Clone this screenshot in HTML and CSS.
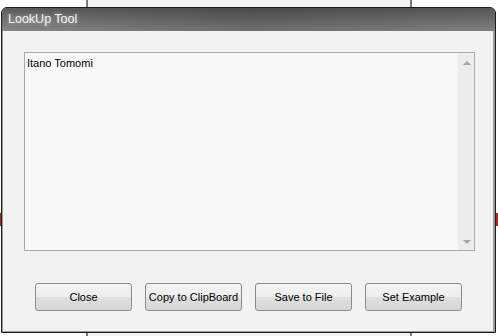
FILE: index.html
```html
<!DOCTYPE html>
<html lang="en">
  <head>
    <meta charset="UTF-8" />
    <title>LookUp Tool</title>
    <link rel="stylesheet" href="styles.css">
  </head>
  <body>
    <div class="window">
      <div class="titlebar">LookUp Tool</div>
      <div class="client">
        <div class="textbox">
          <div class="text">Itano Tomomi</div>
          <div class="scrollbar">
            <span class="arrow up"></span>
            <span class="arrow down"></span>
          </div>
        </div>
        <div class="buttons">
          <button class="btn">Close</button>
          <button class="btn">Copy to ClipBoard</button>
          <button class="btn">Save to File</button>
          <button class="btn">Set Example</button>
        </div>
      </div>
    </div>
  </body>
</html>
```

FILE: styles.css
```css
*,
*::before,
*::after {
  box-sizing: border-box;
}
:root {
  --ff-base: "Liberation Sans", Arial, sans-serif;
}
body {
  margin: 0;
  padding: 7px 0 0 1px;
  height: 336px;
  overflow: hidden;
  font-family: var(--ff-base);
  background:
    linear-gradient(#b3241c, #b3241c) no-repeat 0 213px / 1px 13px,
    linear-gradient(#b3241c, #b3241c) no-repeat 496px 213px / 2px 13px,
    linear-gradient(to right,
      #fff 86px, #7a7a7a 86px, #7a7a7a 88px,
      #f3f3f3 88px, #f3f3f3 410px, #7a7a7a 410px,
      #7a7a7a 412px, #fff 412px);
}
.window {
  width: 495px;
  height: 326px;
  display: flex;
  flex-direction: column;
  border: 1px solid #1c1c1c;
  border-radius: 6px 6px 0 0;
  overflow: hidden;
  background-color: #9c9c9c;
}
.titlebar {
  height: 23px;
  flex: none;
  padding: 4px 0 0 6px;
  font-size: 12.5px;
  color: #f4f4f4;
  text-shadow: 0 0 4px rgba(255, 255, 255, 0.55);
  background:
    linear-gradient(to right, rgba(0, 0, 0, 0) 0%, rgba(0, 0, 0, 0.18) 50%, rgba(0, 0, 0, 0.05) 100%),
    linear-gradient(to bottom, #5a5a5a, #878787);
}
.client {
  flex: 1;
  display: flex;
  flex-direction: column;
  margin: 0 2px 1px 1px;
  padding: 21px 0 0 21px;
  background-color: #f2f2f2;
}
.textbox {
  width: 451px;
  height: 199px;
  display: flex;
  border: 1px solid #a6abb3;
  background-color: #f8f8f8;
}
.text {
  flex: 1;
  padding: 4px 0 0 2px;
  font-size: 11px;
  color: #000;
}
.scrollbar {
  width: 17px;
  display: flex;
  flex-direction: column;
  justify-content: space-between;
  align-items: center;
  padding: 8px 0 6px 1px;
  background-color: #ececec;
  border-left: 1px solid #f4f4f4;
}
.arrow {
  width: 0;
  height: 0;
  border-left: 4px solid transparent;
  border-right: 4px solid transparent;
}
.arrow.up {
  border-bottom: 4px solid #a6a6a6;
}
.arrow.down {
  border-top: 4px solid #a6a6a6;
}
.buttons {
  display: flex;
  gap: 13px;
  margin-top: 32px;
  padding-left: 11px;
}
.btn {
  width: 97px;
  height: 28px;
  padding: 0;
  font-family: var(--ff-base);
  font-size: 11px;
  color: #000;
  border: 1px solid #8a8a8a;
  border-radius: 3px;
  background: linear-gradient(#f4f4f4, #ededed 50%, #e0e0e0 50%, #d6d6d6);
}
```
